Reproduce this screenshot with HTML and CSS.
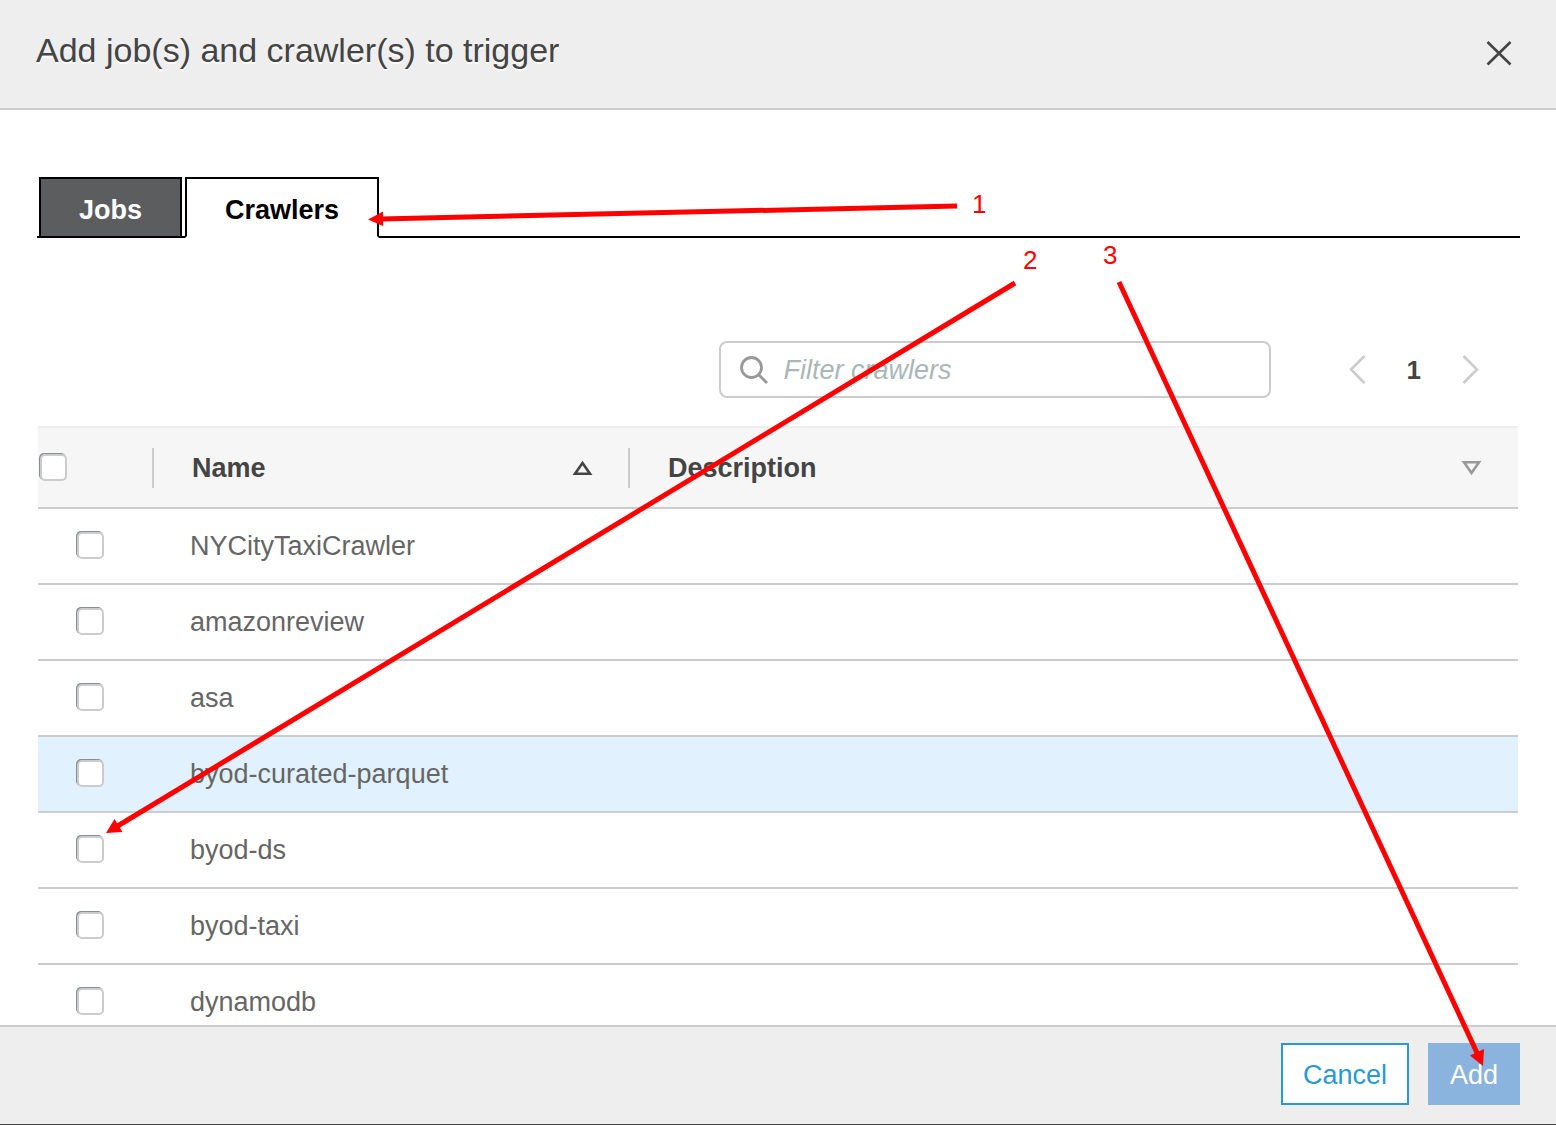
FILE: index.html
```html
<!DOCTYPE html>
<html lang="en">
<head>
<meta charset="utf-8">
<title>Add job(s) and crawler(s) to trigger</title>
<link rel="stylesheet" href="styles.css">
</head>
<body>
<div class="dialog" role="dialog" aria-labelledby="dialog-title">
  <header class="dialog-header">
    <h1 class="dialog-title" id="dialog-title">Add job(s) and crawler(s) to trigger</h1>
    <button class="icon-button close" type="button" aria-label="Close">
      <svg width="26" height="26" viewBox="0 0 26 26" fill="none" stroke="#444" stroke-width="2.6"><path d="M1.5 2 24.500 24.500M24.500 2 1.500 24.500"/></svg>
    </button>
  </header>

  <main class="dialog-body">
    <div class="tabs" role="tablist">
      <button class="tab" type="button" role="tab" aria-selected="false">Jobs</button>
      <button class="tab tab-active" type="button" role="tab" aria-selected="true">Crawlers</button>
    </div>

    <div class="toolbar">
      <label class="filter">
        <svg width="30" height="30" viewBox="0 0 30 30" fill="none" stroke="#999" stroke-width="2.800" aria-hidden="true"><circle cx="12.500" cy="12.500" r="10"/><path d="M19.500 19.500 28 28"/></svg>
        <input class="filter-input" type="text" placeholder="Filter crawlers" aria-label="Filter crawlers">
      </label>
      <nav class="pager" aria-label="Pages">
        <button class="icon-button" type="button" aria-label="Previous page">
          <svg width="18" height="30" viewBox="0 0 18 30" fill="none" stroke="#ccc" stroke-width="2.600"><path d="M15.500 1 2 14.500 15.500 28"/></svg>
        </button>
        <span class="page">1</span>
        <button class="icon-button" type="button" aria-label="Next page">
          <svg width="18" height="30" viewBox="0 0 18 30" fill="none" stroke="#ccc" stroke-width="2.600"><path d="M2.500 1 16 14.500 2.500 28"/></svg>
        </button>
      </nav>
    </div>

    <table class="crawlers">
      <colgroup><col class="col-select"><col class="col-name"><col></colgroup>
      <thead>
        <tr>
          <th class="select-all"><input class="check" type="checkbox" aria-label="Select all crawlers"></th>
          <th scope="col"><div class="heading">Name
            <button class="icon-button" type="button" aria-label="Sort by name"><svg width="22" height="16" viewBox="0 0 22 16" fill="none" stroke="#444" stroke-width="2.600"><path d="M11.500 3 19 13.800H4Z"/></svg></button></div></th>
          <th scope="col"><div class="heading">Description
            <button class="icon-button" type="button" aria-label="Sort by description"><svg width="22" height="16" viewBox="0 0 22 16" fill="none" stroke="#999" stroke-width="2.600"><path d="M10.500 13 18 2.200H3Z"/></svg></button></div></th>
        </tr>
      </thead>
      <tbody>
        <tr><td><input class="check" type="checkbox" id="c1"></td><td><label for="c1">NYCityTaxiCrawler</label></td><td></td></tr>
        <tr><td><input class="check" type="checkbox" id="c2"></td><td><label for="c2">amazonreview</label></td><td></td></tr>
        <tr><td><input class="check" type="checkbox" id="c3"></td><td><label for="c3">asa</label></td><td></td></tr>
        <tr class="row-hover"><td><input class="check" type="checkbox" id="c4"></td><td><label for="c4">byod-curated-parquet</label></td><td></td></tr>
        <tr><td><input class="check" type="checkbox" id="c5"></td><td><label for="c5">byod-ds</label></td><td></td></tr>
        <tr><td><input class="check" type="checkbox" id="c6"></td><td><label for="c6">byod-taxi</label></td><td></td></tr>
        <tr><td><input class="check" type="checkbox" id="c7"></td><td><label for="c7">dynamodb</label></td><td></td></tr>
      </tbody>
    </table>
  </main>

  <footer class="dialog-footer">
    <button class="button" type="button">Cancel</button>
    <button class="button button-primary" type="button">Add</button>
  </footer>

  <!-- Numbered steps drawn over the dialog -->
  <svg class="steps" width="1556" height="1125" viewBox="0 0 1556 1125">
    <g stroke="#f00" stroke-width="5">
      <path d="M957 206 380 219"/>
      <path d="M1015 283 116 827"/>
      <path d="M1119 282 1478 1055"/>
    </g>
    <g fill="#f00">
      <path d="M368 219.500 383 211.500V226Z"/>
      <path d="M106 833 114.500 819 122.500 832Z"/>
      <path d="M1483 1066 1470 1055.500 1484 1049Z"/>
      <text x="972" y="213">1</text>
      <text x="1023" y="269">2</text>
      <text x="1103" y="264">3</text>
    </g>
  </svg>
</div>
</body>
</html>
```
FILE: styles.css
```css
* { box-sizing: border-box; }

body {
  margin: 0;
  background: #fff;
  color: #444;
  font: 27px/32px "Liberation Sans", Arial, sans-serif;
}

button, input { font: inherit; }

.dialog {
  position: relative;
  display: flex;
  flex-direction: column;
  height: 100vh;
  overflow: hidden;
  border-bottom: 1px solid #444;
}

.dialog-header {
  display: flex;
  justify-content: space-between;
  align-items: center;
  flex: none;
  height: 110px;
  padding: 0 44px 8px 36px;
  background: #eee;
  border-bottom: 2px solid #ccc;
}

.dialog-title {
  margin: 0;
  font-size: 34px;
  line-height: 40px;
  font-weight: 400;
  text-shadow: 0 2px 0 #fff;
}

.icon-button {
  display: flex;
  padding: 0;
  border: 0;
  background: none;
}

.close { padding-top: 6px; }

.dialog-body {
  flex: 1;
  min-height: 0;
  overflow: hidden;
  padding: 67px 36px 0 37px;
}

.tabs {
  display: flex;
  gap: 3px;
  padding-left: 2px;
  background: linear-gradient(#000, #000) bottom / 100% 2px no-repeat;
}

.tab {
  height: 61px;
  padding: 4px 38px 0;
  border: 2px solid #000;
  background: #5c5d5f;
  color: #fff;
  font-weight: 700;
}

.tab-active {
  border-bottom-color: #fff;
  background: #fff;
  color: #000;
}

.toolbar {
  display: flex;
  justify-content: flex-end;
  align-items: center;
  gap: 78px;
  padding: 103px 41px 28px 0;
}

.filter {
  display: flex;
  align-items: center;
  gap: 15px;
  width: 552px;
  height: 57px;
  padding: 0 18px;
  border: 2px solid #ccc;
  border-radius: 8px;
}

.filter-input {
  flex: 1;
  min-width: 0;
  padding: 0;
  border: 0;
  outline: 0;
  background: none;
}

.filter-input::placeholder {
  color: #aab7b8;
  font-style: italic;
  opacity: 1;
}

.pager {
  display: flex;
  align-items: center;
  gap: 40px;
}

.page {
  font-size: 26px;
  font-weight: 700;
}

.crawlers {
  width: calc(100% - 3px);
  margin-left: 1px;
  border-collapse: separate;
  border-spacing: 0;
  table-layout: fixed;
  text-align: left;
}

.col-select { width: 114px; }
.col-name { width: 476px; }

.crawlers th {
  height: 83px;
  padding: 0;
  background: #f6f6f6;
  border-top: 2px solid #eee;
  border-bottom: 2px solid #ccc;
}

.heading {
  display: flex;
  justify-content: space-between;
  align-items: center;
  height: 40px;
  padding: 0 35px 0 38px;
  border-left: 2px solid #ccc;
}

.crawlers td {
  height: 76px;
  padding: 0 38px;
  border-bottom: 2px solid #ccc;
  color: #666;
}

.row-hover td { background: #e1f2fe; }

.check {
  display: block;
  appearance: none;
  width: 27px;
  height: 27px;
  margin: 0 0 2px 1px;
  border: 2px solid #ccc;
  border-radius: 5px;
  background: #fff;
  box-shadow: -1px -1px 0 #879093;
}

.select-all .check { margin: 0 0 0 2px; }

.dialog-footer {
  display: flex;
  justify-content: flex-end;
  align-items: center;
  gap: 19px;
  flex: none;
  height: 99px;
  padding: 0 36px 4px;
  background: #eee;
  border-top: 2px solid #ccc;
}

.button {
  height: 62px;
  padding: 2px 20px 0;
  border: 2px solid #2a98d8;
  background: #fff;
  color: #2a98d8;
}

.button-primary {
  border-color: #8ab3de;
  background: #8ab3de;
  color: #fff;
}

.steps {
  position: absolute;
  top: 0;
  left: 0;
  font-size: 26px;
  pointer-events: none;
}
```
